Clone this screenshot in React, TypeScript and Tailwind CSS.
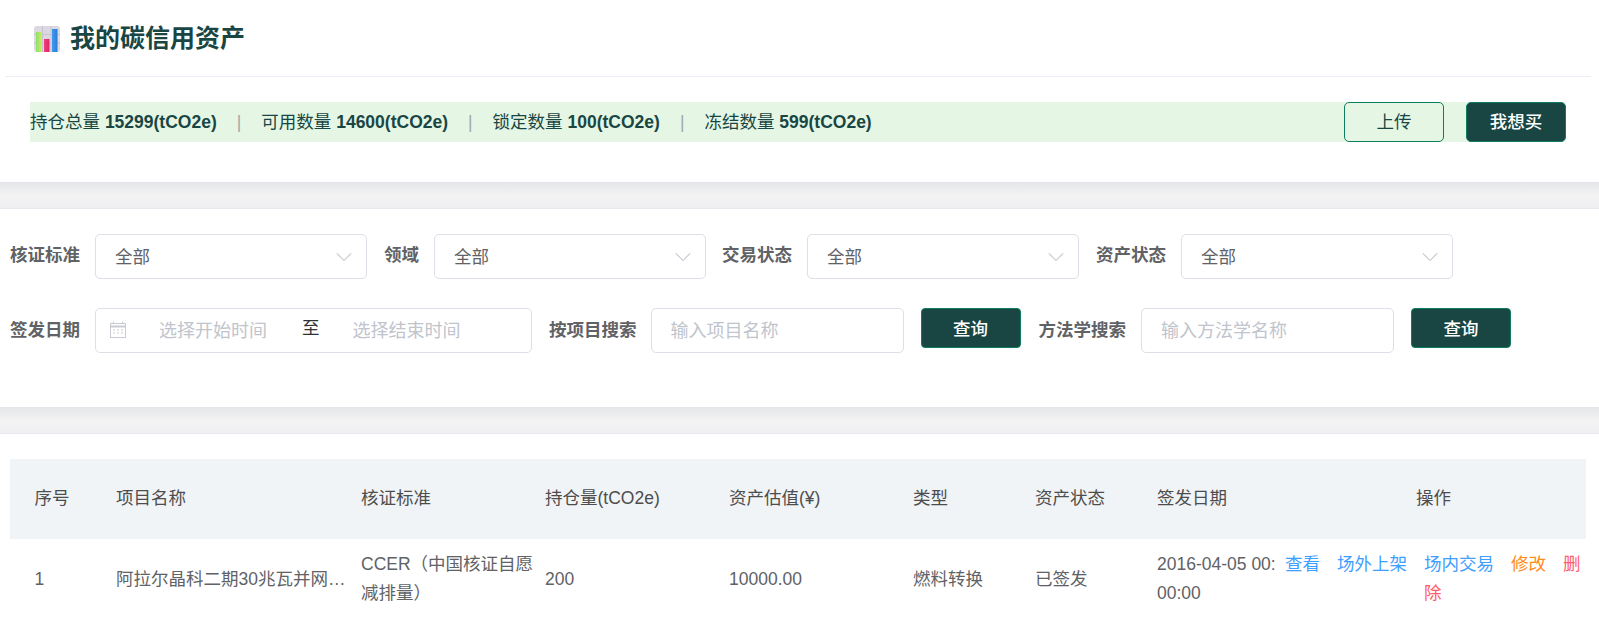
import { ChevronDown } from 'lucide-react';

const FONT = "font-['Liberation_Sans','Noto_Sans_CJK_SC',sans-serif]";

const Band = () => (
  <div className="h-[27px] border-t border-[#e4e4ea] bg-gradient-to-b from-[#e6e7ea] via-[#f3f3f4] to-[#efeff1] border-b-[#e9e9f0] border-b" />
);

const ChartIcon = () => (
  <svg width="26" height="26" viewBox="0 0 26 26" className="shrink-0">
    <defs>
      <linearGradient id="g1" x1="0" y1="0" x2="1" y2="0">
        <stop offset="0" stopColor="#8ee06a" />
        <stop offset="1" stopColor="#c8ea62" />
      </linearGradient>
      <linearGradient id="g2" x1="0" y1="0" x2="1" y2="0">
        <stop offset="0" stopColor="#f0407c" />
        <stop offset="1" stopColor="#e0246a" />
      </linearGradient>
      <linearGradient id="g3" x1="0" y1="0" x2="1" y2="0">
        <stop offset="0" stopColor="#3f9cf0" />
        <stop offset="1" stopColor="#2a7bd8" />
      </linearGradient>
    </defs>
    <rect x="0" y="0" width="26" height="26" rx="3" fill="#dcd8e2" />
    <path d="M0 8.5h26M0 17h26M8.5 0v26M17 0v26" stroke="#c6c2ce" strokeWidth="1" />
    <rect x="2" y="6" width="5.5" height="20" fill="url(#g1)" />
    <rect x="10" y="13" width="5.5" height="13" fill="url(#g2)" />
    <rect x="18" y="3" width="5.5" height="23" fill="url(#g3)" />
  </svg>
);

const CalendarIcon = () => (
  <svg width="16" height="17" viewBox="0 0 16 17" fill="none" stroke="#c8cbd2" strokeWidth="1" className="shrink-0 -mt-[4px]">
    <path d="M3.5 .5v2M12.5 .5v2" />
    <rect x=".5" y="2.5" width="15" height="14" />
    <path d="M.5 5.5h15" strokeWidth="2" />
    <path d="M3 9h2M7 9h2M11 9h2M3 12h2M7 12h2M11 12h2" />
  </svg>
);

const Stat = ({ label, value }: { label: string; value: string }) => (
  <span>
    {label} <b className="font-bold">{value}</b>
  </span>
);

const Divider = () => <span className="mx-[20px] text-[#a3a8a8]">|</span>;

const FilterSelect = ({ label, gap }: { label: string; gap: string }) => (
  <div className={`flex items-center ${gap}`}>
    <span className="font-bold text-[#606266] mr-[15px] mb-[2px] whitespace-nowrap">{label}</span>
    <div className="w-[272px] h-[45px] border border-[#dcdfe6] rounded-[5px] flex items-center justify-between pl-[19px] pr-[8px] text-[#606266]">
      <span className="pt-[2px]">全部</span>
      <ChevronDown size={28} strokeWidth={0.9} className="text-[#c0c4cc]" />
    </div>
  </div>
);

const QueryButton = () => (
  <button className="w-[100px] h-[40px] pt-[2px] bg-[#194643] border border-[#0e7c5f] rounded-[4px] text-white font-medium">
    查询
  </button>
);

const TEXT_INPUT = 'w-[253px] h-[45px] pt-[2px] border border-[#dcdfe6] rounded-[5px] flex items-center pl-[19px] text-[18px] text-[#c0c4cc]';

const columns = 'grid grid-cols-[81.5px_245px_184px_184px_184px_122px_122px_128px_1fr] pl-[24.5px]';

export default function App() {
  return (
    <div className={`${FONT} text-[17.5px] bg-white h-[621px] overflow-hidden`}>
      {/* Header + totals */}
      <div className="h-[182px] px-[5px] pr-[8px]">
        <div className="h-[77px] pt-[1px] border-b border-[#ebeef5] flex items-center pl-[29px] gap-[10px]">
          <ChartIcon />
          <h1 className="text-[25px] font-bold text-[#194643]">我的碳信用资产</h1>
        </div>
        <div className="mt-[25px] ml-[25px] mr-[25px] h-[40px] bg-[#e5f6e5] flex items-center justify-between text-[#194643]">
          <div>
            <Stat label="持仓总量" value="15299(tCO2e)" />
            <Divider />
            <Stat label="可用数量" value="14600(tCO2e)" />
            <Divider />
            <Stat label="锁定数量" value="100(tCO2e)" />
            <Divider />
            <Stat label="冻结数量" value="599(tCO2e)" />
          </div>
          <div className="flex gap-[22px]">
            <button className="w-[100px] h-[40px] border border-[#0e7c5f] rounded-[5px] text-[#194643]">上传</button>
            <button className="w-[100px] h-[40px] bg-[#194643] border border-[#0e7c5f] rounded-[5px] text-white font-medium">我想买</button>
          </div>
        </div>
      </div>
      <Band />

      {/* Filters */}
      <div className="h-[198px] pl-[10px] pt-[25px] flex flex-col gap-[29px]">
        <div className="flex">
          <FilterSelect label="核证标准" gap="mr-[17px]" />
          <FilterSelect label="领域" gap="mr-[16px]" />
          <FilterSelect label="交易状态" gap="mr-[17px]" />
          <FilterSelect label="资产状态" gap="" />
        </div>
        <div className="flex items-center">
          <span className="font-bold text-[#606266] mr-[15px]">签发日期</span>
          <div className="w-[437px] h-[45px] pt-[2px] border border-[#dcdfe6] rounded-[5px] flex items-center pl-[14px] text-[18px] text-[#c0c4cc]">
            <CalendarIcon />
            <span className="ml-[33px]">选择开始时间</span>
            <span className="ml-[35px] -mt-[6px] text-[17.5px] text-[#303133]">至</span>
            <span className="ml-[33px]">选择结束时间</span>
          </div>
          <span className="font-bold text-[#606266] ml-[17px] mr-[14px]">按项目搜索</span>
          <div className={TEXT_INPUT}>输入项目名称</div>
          <div className="ml-[17px] mr-[18px] self-start">
            <QueryButton />
          </div>
          <span className="font-bold text-[#606266] mr-[15px]">方法学搜索</span>
          <div className={TEXT_INPUT}>输入方法学名称</div>
          <div className="ml-[17px] self-start">
            <QueryButton />
          </div>
        </div>
      </div>
      <Band />

      {/* Table */}
      <div className="pt-[25px] pl-[10px] pr-[13px]">
        <div className={`${columns} h-[80px] pb-[2px] bg-[#f0f4f7] items-center text-[#4d4d4d]`}>
          <div>序号</div>
          <div>项目名称</div>
          <div>核证标准</div>
          <div>持仓量(tCO2e)</div>
          <div>资产估值(¥)</div>
          <div>类型</div>
          <div>资产状态</div>
          <div>签发日期</div>
          <div className="pl-[131px]">操作</div>
        </div>
        <div className={`${columns} items-center text-[#606266] leading-[29px] py-[11px]`}>
          <div>1</div>
          <div className="pr-[14px] truncate">阿拉尔晶科二期30兆瓦并网光伏发电项目</div>
          <div className="pr-[10px]">CCER（中国核证自愿减排量）</div>
          <div>200</div>
          <div>10000.00</div>
          <div>燃料转换</div>
          <div>已签发</div>
          <div className="pr-[4px] break-all">2016-04-05 00:00:00</div>
          <div className="flex text-[#409eff]">
            <a className="mr-[17px] whitespace-nowrap">查看</a>
            <a className="mr-[17px] whitespace-nowrap">场外上架</a>
            <div className="min-w-0">
              <a className="mr-[17px]">场内交易</a>
              <a className="mr-[17px] text-[#ff8c1a]">修改</a>
              <a className="text-[#ff5c6c]">删除</a>
            </div>
          </div>
        </div>
      </div>
    </div>
  );
}
